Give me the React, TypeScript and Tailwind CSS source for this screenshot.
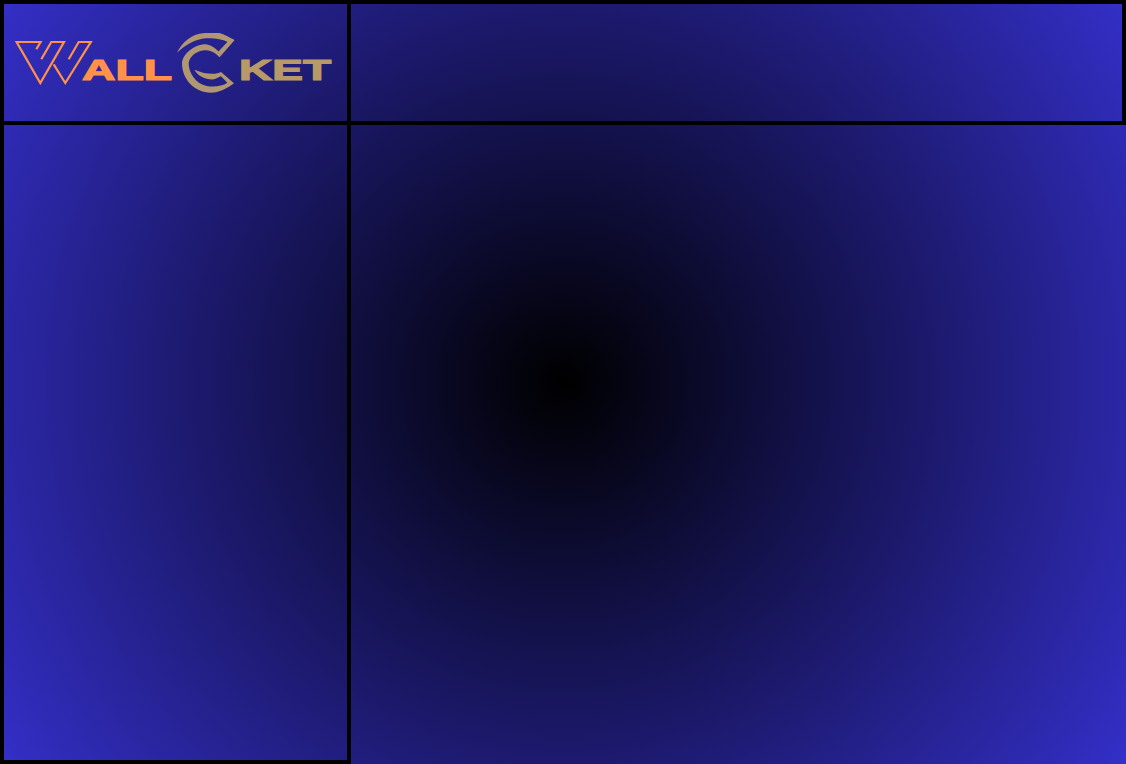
const panelBg =
  "bg-black bg-[radial-gradient(circle_farthest-corner_at_50%_50%,#000000_0%,#342fc8_100%)] bg-fixed";

function Logo() {
  return (
    <svg width="320" height="65" viewBox="0 0 320 65" className="block">
      {/* W mark */}
      <path
        d="M21.3 19.3 L25.6 12 H1.6 L25.3 53 L49 12 H36.3 L26.3 29.3 M38.7 34.3 L50.3 53 L75.8 12 H63.7 L53.7 29.3"
        fill="none"
        stroke="#ff9248"
        strokeWidth="2.2"
      />
      <text
        x="67"
        y="49.5"
        textLength="90"
        lengthAdjust="spacingAndGlyphs"
        fontFamily="'Liberation Sans', sans-serif"
        fontWeight="700"
        fontSize="29"
        fill="#ff9248"
        stroke="#ff9248"
        strokeWidth="1.2"
      >
        ALL
      </text>
      {/* C mark, traced on a 3x grid */}
      <g transform="translate(161 0) scale(0.3333)" fill="#b19672">
        <path d="M3 68 C18 38 45 12 85 9 L130 9 C145 13 160 22 176 30 L136 76 L126 66 L154 36 C140 28 115 24 90 25 C58 28 30 44 3 68 Z" />
        <path d="M136 76 C120 52 100 42 85 43 C52 46 20 72 18 100 C18 145 52 188 105 188 C130 188 152 176 174 160 L135 126 C120 134 90 134 55 119 C65 138 90 150 115 148 L135 139 L154 158 C140 168 115 172 92 168 C60 162 38 130 38 100 C40 80 60 63 85 61 C100 61 118 66 130 82 Z" />
      </g>
      <text
        x="224"
        y="49.5"
        textLength="92"
        lengthAdjust="spacingAndGlyphs"
        fontFamily="'Liberation Sans', sans-serif"
        fontWeight="700"
        fontSize="29"
        fill="#b89a68"
        stroke="#b89a68"
        strokeWidth="1.2"
      >
        KET
      </text>
    </svg>
  );
}

export default function App() {
  return (
    <div className="grid h-screen w-screen grid-cols-[343px_1fr] grid-rows-[117px_1fr] gap-1 overflow-hidden bg-black pt-1 pl-1">
      <div className={`flex items-center pl-[11px] ${panelBg}`}>
        <Logo />
      </div>
      <div className={`mr-1 ${panelBg}`} />
      <div className={`mb-1 ${panelBg}`} />
      <div className={panelBg} />
    </div>
  );
}
